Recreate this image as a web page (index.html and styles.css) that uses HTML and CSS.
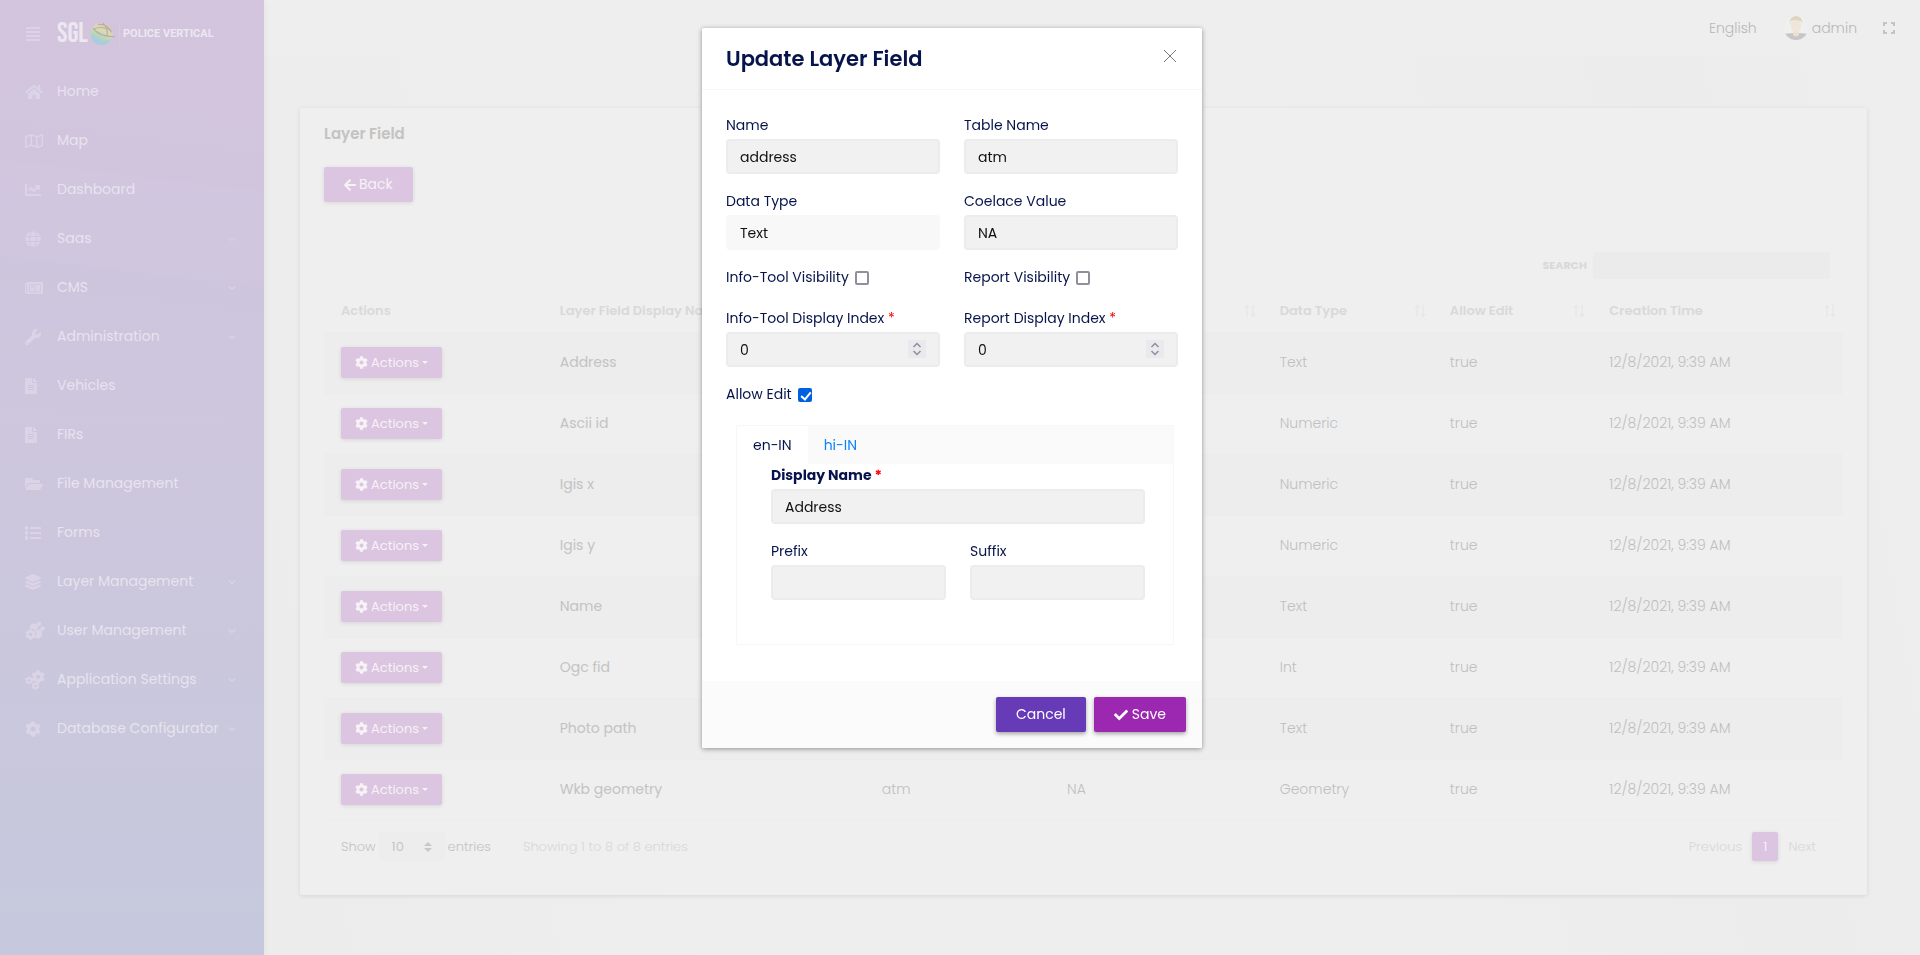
FILE: index.html
```html
<!DOCTYPE html>
<html lang="en">
<head>
<meta charset="utf-8">
<title>Layer Field</title>
<link rel="stylesheet" href="styles.css">
</head>
<body>
<svg class="sprite" aria-hidden="true">
  <symbol id="i-home" viewBox="0 0 576 512"><path d="M280.37 148.26L96 300.11V464a16 16 0 0 0 16 16l112.06-.29a16 16 0 0 0 15.92-16V368a16 16 0 0 1 16-16h64a16 16 0 0 1 16 16v95.64a16 16 0 0 0 16 16.05L464 480a16 16 0 0 0 16-16V300L295.67 148.26a12.19 12.19 0 0 0-15.3 0zM571.6 251.47L488 182.56V44.05a12 12 0 0 0-12-12h-56a12 12 0 0 0-12 12v72.61L318.47 43a48 48 0 0 0-61 0L4.34 251.47a12 12 0 0 0-1.6 16.9l25.5 31A12 12 0 0 0 45.15 301l235.22-193.74a12.19 12.19 0 0 1 15.3 0L530.9 301a12 12 0 0 0 16.9-1.6l25.5-31a12 12 0 0 0-1.7-16.93z"/></symbol>
  <symbol id="i-map" viewBox="0 0 576 512"><path d="M560.02 32c-1.96 0-3.98.37-5.96 1.16L384.01 96H384L212 35.28A64.252 64.252 0 0 0 191.76 32c-6.69 0-13.37 1.05-19.81 3.14L20.12 87.95A32.006 32.006 0 0 0 0 117.66v346.32C0 473.17 7.53 480 15.99 480c1.96 0 3.97-.37 5.96-1.16L192 416l172 60.71a63.98 63.98 0 0 0 40.05.15l151.83-52.81A31.996 31.996 0 0 0 576 394.34V48.02c0-9.19-7.53-16.02-15.98-16.02zM224 90.42l128 45.19v285.97l-128-45.19V90.42zM48 418.05V129.07l128-44.53v286.2l-.64.23L48 418.05zm480-35.13l-128 44.53V141.26l.64-.24L528 93.95v288.97z"/></symbol>
  <symbol id="i-chart" viewBox="0 0 512 512"><path d="M496 384H64V80c0-8.84-7.16-16-16-16H16C7.16 64 0 71.16 0 80v336c0 17.67 14.33 32 32 32h464c8.84 0 16-7.16 16-16v-32c0-8.84-7.16-16-16-16zM464 96H345.94c-21.38 0-32.09 25.85-16.97 40.97l32.4 32.4L288 242.75l-73.37-73.37c-12.5-12.5-32.76-12.5-45.25 0l-68.69 68.69c-6.25 6.25-6.25 16.38 0 22.63l22.62 22.62c6.25 6.25 16.38 6.25 22.63 0L192 237.25l73.37 73.37c12.5 12.5 32.76 12.5 45.25 0l96-96 32.4 32.4c15.12 15.12 40.97 4.41 40.97-16.97V112c.01-8.84-7.15-16-15.99-16z"/></symbol>
  <symbol id="i-globe" viewBox="0 0 496 512"><path d="M336.5 160C322 70.7 287.8 8 248 8s-74 62.7-88.5 152h177zM152 256c0 22.2 1.2 43.5 3.3 64h185.3c2.1-20.5 3.3-41.8 3.3-64s-1.2-43.5-3.3-64H155.3c-2.1 20.5-3.3 41.8-3.3 64zm324.7-96c-28.6-67.9-86.5-120.4-158-141.6 24.4 33.8 41.2 84.7 50 141.6h108zM177.2 18.4C105.8 39.6 47.8 92.1 19.3 160h108c8.7-56.9 25.5-107.8 49.9-141.6zM487.4 192H372.7c2.1 21 3.3 42.5 3.3 64s-1.2 43-3.3 64h114.6c5.5-20.5 8.6-41.8 8.6-64s-3.1-43.5-8.5-64zM120 256c0-21.5 1.2-43 3.3-64H8.6C3.2 212.5 0 233.8 0 256s3.2 43.5 8.6 64h114.6c-2-21-3.2-42.5-3.2-64zm39.5 96c14.5 89.3 48.7 152 88.5 152s74-62.7 88.5-152h-177zm159.3 141.6c71.4-21.2 129.4-73.7 158-141.6h-108c-8.8 56.9-25.6 107.8-50 141.6zM19.3 352c28.6 67.9 86.5 120.4 158 141.6-24.4-33.8-41.2-84.7-50-141.6h-108z"/></symbol>
  <symbol id="i-news" viewBox="0 0 576 512"><path fill-rule="evenodd" d="M88 64h464c13 0 24 11 24 24v336c0 13-11 24-24 24H56c-31 0-56-25-56-56V120c0-13 11-24 24-24h40v-8c0-13 11-24 24-24zM40 136v256c0 9 7 16 16 16s16-7 16-16V136zM130 124v264h380V124zM154 148h154v216H154zM332 148h154v216H332zM190 184v48h84v-48z"/></symbol>
  <symbol id="i-wrench" viewBox="0 0 512 512"><path d="M507.73 109.1c-2.24-9.03-13.54-12.09-20.12-5.51l-74.36 74.36-67.88-11.31-11.31-67.88 74.36-74.36c6.62-6.62 3.43-17.9-5.66-20.16-47.38-11.74-99.55.91-136.58 37.93-39.64 39.64-50.55 97.1-34.05 147.2L18.74 402.76c-24.99 24.99-24.99 65.51 0 90.5 24.99 24.99 65.51 24.99 90.5 0l213.21-213.21c50.12 16.71 107.47 5.68 147.37-34.22 37.07-37.07 49.7-89.32 37.91-136.73zM64 472c-13.25 0-24-10.75-24-24 0-13.26 10.75-24 24-24s24 10.74 24 24c0 13.25-10.75 24-24 24z"/></symbol>
  <symbol id="i-file" viewBox="0 0 384 512"><path d="M224 136V0H24C10.7 0 0 10.7 0 24v464c0 13.3 10.7 24 24 24h336c13.3 0 24-10.7 24-24V160H248c-13.2 0-24-10.8-24-24zm64 236c0 6.6-5.4 12-12 12H108c-6.6 0-12-5.4-12-12v-8c0-6.6 5.4-12 12-12h168c6.6 0 12 5.4 12 12v8zm0-64c0 6.6-5.4 12-12 12H108c-6.6 0-12-5.4-12-12v-8c0-6.6 5.4-12 12-12h168c6.6 0 12 5.4 12 12v8zm0-72v8c0 6.6-5.4 12-12 12H108c-6.6 0-12-5.4-12-12v-8c0-6.6 5.4-12 12-12h168c6.6 0 12 5.4 12 12zm96-114.1v6.1H256V0h6.1c6.4 0 12.5 2.5 17 7l97.9 98c4.5 4.5 7 10.6 7 16.9z"/></symbol>
  <symbol id="i-folder" viewBox="0 0 576 512"><path d="M572.694 292.093L500.27 416.248A63.997 63.997 0 0 1 444.989 448H45.025c-18.523 0-30.064-20.093-20.731-36.093l72.424-124.155A64 64 0 0 1 152 256h399.964c18.523 0 30.064 20.093 20.73 36.093zM152 224h328v-48c0-26.51-21.49-48-48-48H272l-64-64H48C21.49 64 0 85.49 0 112v278.046l69.077-118.418C86.214 242.25 117.989 224 152 224z"/></symbol>
  <symbol id="i-list" viewBox="0 0 16 16"><rect x="0" y="1" width="3" height="4" rx="1"/><rect x="0" y="6" width="3" height="4" rx="1"/><rect x="0" y="11" width="3" height="4" rx="1"/><rect x="5" y="2" width="11" height="2" rx=".5"/><rect x="5" y="7" width="11" height="2" rx=".5"/><rect x="5" y="12" width="11" height="2" rx=".5"/></symbol>
  <symbol id="i-layers" viewBox="0 0 512 512"><path d="M12.41 148.02l232.94 105.67c6.8 3.09 14.49 3.09 21.29 0l232.94-105.67c16.55-7.51 16.55-32.52 0-40.03L266.65 2.31a25.607 25.607 0 0 0-21.29 0L12.41 107.98c-16.55 7.51-16.55 32.53 0 40.04zm487.18 88.28l-58.09-26.33-161.64 73.27c-7.56 3.43-15.59 5.17-23.86 5.17s-16.29-1.74-23.86-5.17L70.51 209.97l-58.1 26.33c-16.55 7.5-16.55 32.5 0 40l232.94 105.59c6.8 3.08 14.49 3.08 21.29 0L499.59 276.3c16.55-7.5 16.55-32.5 0-40zm0 127.8l-57.87-26.23-161.86 73.37c-7.56 3.43-15.59 5.17-23.86 5.17s-16.29-1.74-23.86-5.17L70.29 337.87 12.41 364.1c-16.55 7.5-16.55 32.5 0 40l232.94 105.59c6.8 3.08 14.49 3.08 21.29 0L499.59 404.1c16.55-7.5 16.55-32.5 0-40z"/></symbol>
  <symbol id="i-cog" viewBox="0 0 512 512"><path d="M487.4 315.7l-42.6-24.6c4.3-23.2 4.3-47 0-70.2l42.6-24.6c4.9-2.8 7.1-8.6 5.5-14-11.1-35.6-30-67.8-54.7-94.6-3.8-4.1-10-5.1-14.8-2.3L380.8 110c-17.9-15.4-38.5-27.3-60.8-35.1V25.8c0-5.6-3.9-10.5-9.4-11.7-36.7-8.2-74.3-7.8-109.2 0-5.5 1.2-9.4 6.1-9.4 11.7V75c-22.2 7.9-42.8 19.8-60.8 35.1L88.7 85.5c-4.9-2.8-11-1.9-14.8 2.3-24.7 26.7-43.6 58.9-54.7 94.6-1.7 5.4.6 11.2 5.5 14L67.3 221c-4.3 23.2-4.3 47 0 70.2l-42.6 24.6c-4.9 2.8-7.1 8.6-5.5 14 11.1 35.6 30 67.8 54.7 94.6 3.8 4.1 10 5.1 14.8 2.3l42.6-24.6c17.9 15.4 38.5 27.3 60.8 35.1v49.2c0 5.6 3.9 10.5 9.4 11.7 36.7 8.2 74.3 7.8 109.2 0 5.5-1.2 9.4-6.1 9.4-11.7v-49.2c22.2-7.9 42.8-19.8 60.8-35.1l42.6 24.6c4.9 2.8 11 1.9 14.8-2.3 24.7-26.7 43.6-58.9 54.7-94.6 1.5-5.5-.7-11.3-5.6-14.1zM256 336c-44.1 0-80-35.9-80-80s35.9-80 80-80 80 35.9 80 80-35.9 80-80 80z"/></symbol>
  <symbol id="i-usercog" viewBox="0 0 20 20"><use href="#i-cog" x="0" y="8" width="11" height="11"/><circle cx="14" cy="3" r="2.300"/><circle cx="17.500" cy="7.500" r="2.200"/><path d="M4 7.500C5 3.500 8 1.500 11.500 3c0 2 1 3 2.500 3.500-2 1-3 2-3 4C8.500 7.500 6 7 4 7.500z"/><path d="M11 10c2-3 6-2 6 1 .500 4-1 6.500-4 6.500-2 0-2.500-1-3.500-2 2-1.500 2.500-3 1.500-5.500z"/></symbol>
  <symbol id="i-cogs" viewBox="0 0 22 22"><use href="#i-cog" x="7" y="0" width="15" height="15"/><use href="#i-cog" x="0" y="7" width="9" height="9"/><use href="#i-cog" x="7" y="13" width="9" height="9"/></symbol>
  <symbol id="i-check" viewBox="0 0 512 512"><path d="M173.898 439.404l-166.4-166.4c-9.997-9.997-9.997-26.206 0-36.204l36.203-36.204c9.997-9.998 26.207-9.998 36.204 0L192 312.69 432.095 72.596c9.997-9.997 26.207-9.997 36.204 0l36.203 36.204c9.997 9.997 9.997 26.206 0 36.204l-294.4 294.401c-9.998 9.997-26.207 9.997-36.204-.001z"/></symbol>
  <symbol id="i-back" viewBox="0 0 448 512"><path d="M257.5 445.1l-22.2 22.2c-9.4 9.4-24.6 9.4-33.9 0L7 273c-9.4-9.4-9.4-24.6 0-33.9L201.4 44.7c9.4-9.4 24.6-9.4 33.9 0l22.2 22.2c9.5 9.5 9.3 25-.4 34.3L136.6 216H424c13.3 0 24 10.7 24 24v32c0 13.3-10.7 24-24 24H136.6l120.5 114.8c9.8 9.3 10 24.8.4 34.3z"/></symbol>
  <symbol id="i-chevron" viewBox="0 0 10 10"><path d="M1 3 5 7 9 3" fill="none" stroke="currentColor" stroke-width="1.800"/></symbol>
  <symbol id="i-sort" viewBox="0 0 12 14"><path d="M3 13V1.500M1 4l2-2.500L5 4M9 1v11.500M7 10l2 2.500L11 10" fill="none" stroke="currentColor"/></symbol>
  <symbol id="i-spin" viewBox="0 0 18 18"><path d="M5.500 7 9 3.500 12.500 7M5.500 11 9 14.500 12.500 11" fill="none" stroke="currentColor" stroke-width="1.500"/></symbol>
</svg>

<div class="app">
  <aside class="sidebar">
    <div class="brand">
      <button class="burger" type="button" aria-label="Toggle menu"><svg viewBox="0 0 14 14"><path d="M0 1h14M0 5h14M0 9h14M0 13h14" stroke="currentColor" stroke-width="2"/></svg></button>
      <a class="logo" href="#">
        <span class="logo-name">SGL</span>
        <svg class="logo-globe" viewBox="0 0 25 24"><defs><linearGradient id="gl" x1=".8" y1="0" x2=".3" y2="1"><stop offset="0" stop-color="#e9c8ad"/><stop offset=".4" stop-color="#dbdab0"/><stop offset=".65" stop-color="#b6d8b5"/><stop offset="1" stop-color="#a4c8e2"/></linearGradient></defs><circle cx="11.500" cy="12" r="11" fill="url(#gl)"/><path d="M1 14c3-2 5 0 8 3s8 2 12 0c-3 7-17 8-20-3z" fill="#a9cde0"/><path d="M3 6.500c5 6 12 8.500 22 8M8 2.500c6-1 11 2 13.500 8M13 1c3 3 5 7 4 13M3.500 7c5-2 12-2 18 1.500" fill="none" stroke="#b5b0ae" stroke-width="1.200"/></svg>
        <span class="logo-product">POLICE VERTICAL</span>
      </a>
    </div>
    <nav class="nav">
      <a href="#"><svg class="w18"><use href="#i-home"/></svg><span>Home</span></a>
      <a href="#"><svg class="w18"><use href="#i-map"/></svg><span>Map</span></a>
      <a href="#"><svg class="w16"><use href="#i-chart"/></svg><span>Dashboard</span></a>
      <a href="#"><svg class="w16"><use href="#i-globe"/></svg><span>Saas</span><svg class="chev"><use href="#i-chevron"/></svg></a>
      <a href="#"><svg class="w18"><use href="#i-news"/></svg><span>CMS</span><svg class="chev"><use href="#i-chevron"/></svg></a>
      <a href="#"><svg class="w16"><use href="#i-wrench"/></svg><span>Administration</span><svg class="chev"><use href="#i-chevron"/></svg></a>
      <a href="#"><svg class="w12"><use href="#i-file"/></svg><span>Vehicles</span></a>
      <a href="#"><svg class="w12"><use href="#i-file"/></svg><span>FIRs</span></a>
      <a href="#"><svg class="w18"><use href="#i-folder"/></svg><span>File Management</span></a>
      <a href="#"><svg class="w16"><use href="#i-list"/></svg><span>Forms</span></a>
      <a href="#"><svg class="w16"><use href="#i-layers"/></svg><span>Layer Management</span><svg class="chev"><use href="#i-chevron"/></svg></a>
      <a href="#"><svg class="w20"><use href="#i-usercog"/></svg><span>User Management</span><svg class="chev"><use href="#i-chevron"/></svg></a>
      <a href="#"><svg class="w20"><use href="#i-cogs"/></svg><span>Application Settings</span><svg class="chev"><use href="#i-chevron"/></svg></a>
      <a href="#"><svg class="w16"><use href="#i-cog"/></svg><span>Database Configurator</span><svg class="chev"><use href="#i-chevron"/></svg></a>
    </nav>
  </aside>

  <div class="page">
    <header class="topbar">
      <a class="lang" href="#">English</a>
      <a class="user" href="#"><svg class="avatar" viewBox="0 0 24 24"><defs><clipPath id="av"><circle cx="12" cy="12" r="12"/></clipPath></defs><circle cx="12" cy="12" r="12" fill="#f0f0f0"/><g clip-path="url(#av)"><path d="M0 18q12-2 24 0v6H0z" fill="#c6c6c6"/><path d="M9 14h6v5q-3 3-6 0z" fill="#ebdfd2"/><ellipse cx="12" cy="10" rx="5" ry="7" fill="#efe5da"/><path d="M6 9C5 2 9 0 12 0s7 2 6 8l-1-3q-3 0-5-1-3 0-5 1z" fill="#ddd4c2"/></g></svg>admin</a>
      <button class="full" type="button" aria-label="Full screen"><svg viewBox="0 0 12 12"><path d="M1 4V1h3M8 1h3v3M11 8v3H8M4 11H1V8" fill="none" stroke="currentColor" stroke-width="2"/></svg></button>
    </header>

    <main class="card">
      <h1 class="card-title">Layer Field</h1>
      <button class="btn pale" type="button"><svg class="w12"><use href="#i-back"/></svg>Back</button>
      <div class="search"><label for="q">SEARCH</label><input id="q" type="search"></div>

      <table class="grid">
        <colgroup><col class="c1"><col class="c2"><col class="c3"><col class="c4"><col class="c5"><col class="c6"><col class="c7"></colgroup>
        <thead><tr>
          <th>Actions</th>
          <th><div class="th">Layer Field Display Name<svg><use href="#i-sort"/></svg></div></th>
          <th><div class="th">Table Name<svg><use href="#i-sort"/></svg></div></th>
          <th><div class="th">Coelace Value<svg><use href="#i-sort"/></svg></div></th>
          <th><div class="th">Data Type<svg><use href="#i-sort"/></svg></div></th>
          <th><div class="th">Allow Edit<svg><use href="#i-sort"/></svg></div></th>
          <th><div class="th">Creation Time<svg><use href="#i-sort"/></svg></div></th>
        </tr></thead>
        <tbody>
          <tr><td><button class="btn pale small" type="button"><svg class="w13"><use href="#i-cog"/></svg>Actions<i class="caret"></i></button></td><td class="main">Address</td><td>atm</td><td>NA</td><td>Text</td><td>true</td><td>12/8/2021, 9:39 AM</td></tr>
          <tr><td><button class="btn pale small" type="button"><svg class="w13"><use href="#i-cog"/></svg>Actions<i class="caret"></i></button></td><td class="main">Ascii id</td><td>atm</td><td>NA</td><td>Numeric</td><td>true</td><td>12/8/2021, 9:39 AM</td></tr>
          <tr><td><button class="btn pale small" type="button"><svg class="w13"><use href="#i-cog"/></svg>Actions<i class="caret"></i></button></td><td class="main">Igis x</td><td>atm</td><td>NA</td><td>Numeric</td><td>true</td><td>12/8/2021, 9:39 AM</td></tr>
          <tr><td><button class="btn pale small" type="button"><svg class="w13"><use href="#i-cog"/></svg>Actions<i class="caret"></i></button></td><td class="main">Igis y</td><td>atm</td><td>NA</td><td>Numeric</td><td>true</td><td>12/8/2021, 9:39 AM</td></tr>
          <tr><td><button class="btn pale small" type="button"><svg class="w13"><use href="#i-cog"/></svg>Actions<i class="caret"></i></button></td><td class="main">Name</td><td>atm</td><td>NA</td><td>Text</td><td>true</td><td>12/8/2021, 9:39 AM</td></tr>
          <tr><td><button class="btn pale small" type="button"><svg class="w13"><use href="#i-cog"/></svg>Actions<i class="caret"></i></button></td><td class="main">Ogc fid</td><td>atm</td><td>NA</td><td>Int</td><td>true</td><td>12/8/2021, 9:39 AM</td></tr>
          <tr><td><button class="btn pale small" type="button"><svg class="w13"><use href="#i-cog"/></svg>Actions<i class="caret"></i></button></td><td class="main">Photo path</td><td>atm</td><td>NA</td><td>Text</td><td>true</td><td>12/8/2021, 9:39 AM</td></tr>
          <tr><td><button class="btn pale small" type="button"><svg class="w13"><use href="#i-cog"/></svg>Actions<i class="caret"></i></button></td><td class="main">Wkb geometry</td><td>atm</td><td>NA</td><td>Geometry</td><td>true</td><td>12/8/2021, 9:39 AM</td></tr>
        </tbody>
      </table>

      <div class="table-foot">
        <label class="length">Show
          <span class="picker"><select><option>10</option><option>25</option><option>50</option></select><svg viewBox="0 0 8 10"><path d="M0 4 4 0l4 4zM0 6l4 4 4-4z"/></svg></span>
          entries</label>
        <span class="info">Showing 1 to 8 of 8 entries</span>
        <div class="pager"><a href="#">Previous</a><a class="current" href="#">1</a><a href="#">Next</a></div>
      </div>
    </main>
  </div>
</div>

<div class="overlay">
  <form class="modal" role="dialog" aria-labelledby="dlg-title">
    <header class="modal-head">
      <h2 id="dlg-title">Update Layer Field</h2>
      <button class="close" type="button" aria-label="Close"><svg viewBox="0 0 14 14"><path d="M1 1l12 12M13 1 1 13" stroke="currentColor"/></svg></button>
    </header>
    <div class="modal-body">
      <div class="pair">
        <div class="field"><label for="name">Name</label><input id="name" type="text" value="address"></div>
        <div class="field"><label for="table">Table Name</label><input id="table" type="text" value="atm"></div>
        <div class="field"><label for="type">Data Type</label><select id="type" disabled><option>Text</option></select></div>
        <div class="field"><label for="coal">Coelace Value</label><input id="coal" type="text" value="NA"></div>
        <div class="tick"><label for="iv">Info-Tool Visibility</label><input id="iv" type="checkbox"></div>
        <div class="tick"><label for="rv">Report Visibility</label><input id="rv" type="checkbox"></div>
        <div class="field"><label for="ii">Info-Tool Display Index <b class="req">*</b></label><div class="number"><input id="ii" type="number" value="0"><svg><use href="#i-spin"/></svg></div></div>
        <div class="field"><label for="ri">Report Display Index <b class="req">*</b></label><div class="number"><input id="ri" type="number" value="0"><svg><use href="#i-spin"/></svg></div></div>
        <div class="tick"><label for="ae">Allow Edit</label><input id="ae" type="checkbox" checked></div>
      </div>
      <section class="tabs">
        <div class="tab-bar" role="tablist"><button class="tab active" type="button" role="tab">en-IN</button><button class="tab" type="button" role="tab">hi-IN</button></div>
        <div class="tab-body">
          <div class="field strong"><label for="dn">Display Name <b class="req">*</b></label><input id="dn" type="text" value="Address"></div>
          <div class="pair">
            <div class="field"><label for="pre">Prefix</label><input id="pre" type="text"></div>
            <div class="field"><label for="suf">Suffix</label><input id="suf" type="text"></div>
          </div>
        </div>
      </section>
    </div>
    <footer class="modal-foot">
      <button class="btn cancel" type="button">Cancel</button>
      <button class="btn save" type="submit"><svg class="w14"><use href="#i-check"/></svg>Save</button>
    </footer>
  </form>
</div>
</body>
</html>
```
FILE: styles.css
```css
* { box-sizing: border-box; }
body {
  margin: 0;
  font-family: Poppins, Inter, "Open Sans", sans-serif;
  font-size: 14px;
  line-height: 21px;
  color: #cacaca;
  background: #eee;
}
button, input, select { font: inherit; color: inherit; }
button { cursor: pointer; }
a { color: inherit; text-decoration: none; }
svg { fill: currentColor; flex: none; }
.sprite { position: absolute; width: 0; height: 0; }
.w12 { width: 12px; height: 16px; }
.w13 { width: 13px; height: 13px; }
.w14 { width: 14px; height: 14px; }
.w16 { width: 16px; height: 16px; }
.w18 { width: 18px; height: 16px; }
.w20 { width: 20px; height: 20px; }

.app { display: grid; grid-template-columns: 264px minmax(0, 1fr); min-height: 100vh; }

.sidebar {
  z-index: 1;
  color: #e8e3ee;
  background:
    linear-gradient(187deg, rgba(212, 196, 222, .8) 0, rgba(208, 196, 221, .6) 190px, transparent 191px),
    linear-gradient(187deg, transparent 285px, rgba(204, 197, 220, .5) 286px, transparent 440px),
    linear-gradient(#d4c6df 0, #cfc6de 300px, #cbc7dd 600px, #c6c9dd 100%);
  box-shadow: 0 0 6px rgba(0, 0, 0, .06);
}
.brand { display: flex; align-items: center; height: 67px; padding: 0 25px 0 26px; gap: 17px; }
.burger { display: flex; width: 14px; height: 14px; padding: 0; border: 0; background: none; color: #ddd3e6; }
.burger svg { width: 14px; height: 14px; }
.logo { display: flex; align-items: center; color: #ece8f0; }
.logo-name { font-family: "Bebas Neue", Oswald, "Roboto Condensed", "Liberation Sans Narrow", sans-serif; font-size: 28px; line-height: 28px; font-weight: 400; }
.logo-globe { width: 25px; height: 24px; margin-left: 2px; }
.logo-product { margin-left: 4px; padding-left: 3px; border-left: 1px solid #dcc9d6; font-family: Roboto, sans-serif; font-size: 11px; line-height: 24px; font-weight: 700; white-space: nowrap; }
.nav { display: flex; flex-direction: column; }
.nav a { display: grid; grid-template-columns: 32px 1fr 8px; align-items: center; height: 49px; padding: 0 28px 0 25px; }
.nav svg { color: #dad4e6; }
.nav .chev { width: 8px; height: 8px; color: #d8d2e4; }

.page { display: flex; flex-direction: column; background: linear-gradient(80deg, #ececec 0, #eee 30%, #eee 60%, #ececec 85%, #eee 100%); }
.topbar { display: flex; justify-content: flex-end; align-items: center; height: 56px; padding-right: 25px; font-weight: 300; color: #b8b8b8; background: #eee; }
.user { display: flex; align-items: center; gap: 4px; margin: 0 26px 0 27px; }
.avatar { width: 24px; height: 24px; }
.full { display: flex; padding: 0; border: 0; background: none; color: #c4c4c4; }
.full svg { width: 12px; height: 12px; }

.card { margin: 52px 53px 60px 36px; padding: 16px 24px 34px; border-radius: 2px; background: #efefef; box-shadow: 0 1px 4px rgba(0, 0, 0, .1); }
.card-title { margin: 0 0 23px; font-size: 15px; line-height: 20px; font-weight: 600; color: #c3c3c3; }
.btn { display: inline-flex; align-items: center; justify-content: center; gap: 4px; height: 35px; padding: 0 20px; border: 0; border-radius: 2px; color: #fff; box-shadow: 0 2px 4px rgba(0, 0, 0, .35); }
.btn.pale { gap: 3px; color: #f6f2f6; background: #dcc5e1; box-shadow: 0 1px 4px rgba(0, 0, 0, .1); }
.btn.small { height: 31px; padding: 0 14px; font-size: 13px; }
.caret { border: 3px solid transparent; border-top-color: currentColor; border-bottom: 0; }
.search { display: flex; justify-content: flex-end; align-items: center; gap: 6px; margin-top: 50px; padding-right: 13px; font-size: 11px; font-weight: 700; color: #d9d9d9; }
.search input { width: 237px; height: 27px; border: 0; border-radius: 3px; background: #ebebeb; }

.grid { width: 100%; margin-top: 11px; border-collapse: collapse; table-layout: fixed; }
.c1 { width: 14.4%; }
.c2 { width: 21.2%; }
.c3 { width: 12.2%; }
.c4 { width: 14%; }
.c5 { width: 11.2%; }
.c6 { width: 10.5%; }
.c7 { width: 16.5%; }
.grid th { height: 42px; padding: 0 7px 0 17px; text-align: left; font-size: 13px; font-weight: 600; color: #d9d9d9; border-bottom: 1px solid #ececec; }
.th { display: flex; justify-content: space-between; align-items: center; white-space: nowrap; }
.th svg { width: 12px; height: 14px; color: #e4e4e4; }
.grid td { height: 61px; padding: 0 17px; font-weight: 300; color: #bfbfbf; border-bottom: 1px solid #ececec; }
.grid td .btn { vertical-align: middle; font-weight: 400; }
.grid tbody tr:nth-child(odd) { background: #ededed; }
.grid td.main { font-weight: 400; color: #c3c3c3; }

.table-foot { display: flex; align-items: center; margin-top: 11px; padding: 0 27px 0 17px; font-size: 13px; font-weight: 300; }
.length { display: flex; align-items: center; gap: 3px; color: #c3c3c8; }
.picker { position: relative; display: flex; }
.picker select { width: 66px; height: 29px; padding: 0 12px; appearance: none; border: 1px solid #ececec; border-radius: 4px; background: #ededed; font-weight: 400; color: #c6c6c6; }
.picker svg { position: absolute; right: 13px; top: 10px; width: 8px; height: 10px; color: #c8c8c8; pointer-events: none; }
.info { margin-left: 32px; color: #d8d8db; }
.pager { display: flex; align-items: center; gap: 10px; margin-left: auto; color: #d8d8db; }
.pager .current { padding: 4px 11px; border-radius: 2px; background: #dcc5e1; font-weight: 400; color: #f6f2f6; box-shadow: 0 1px 4px rgba(0, 0, 0, .1); }

.overlay { position: fixed; inset: 0; z-index: 2; overflow: auto; padding: 28px 16px 28px 0; }
.modal { width: 500px; max-width: 100%; margin: 0 auto; border-radius: 2px; background: #fff; color: #07144b; box-shadow: 0 1px 5px rgba(0, 0, 0, .4); }
.modal-head { display: flex; justify-content: space-between; padding: 16px 25px 15px 24px; border-bottom: 1px solid #f7f7f7; }
.modal-head h2 { margin: 0; font-size: 21px; line-height: 30px; font-weight: 600; }
.close { display: flex; align-self: flex-start; margin-top: 5px; padding: 0; border: 0; background: none; color: #777; }
.close svg { width: 14px; height: 14px; }
.modal-body { padding: 25px 24px 36px; }
.pair { display: grid; grid-template-columns: 1fr 1fr; column-gap: 24px; }
.field { display: flex; flex-direction: column; gap: 3px; margin-bottom: 17px; min-width: 0; }
.field input, .field select { width: 100%; height: 35px; padding: 1px 12px 0; border: 2px solid #ececec; border-radius: 4px; background: #f1f1f1; color: #111; }
.field select { appearance: none; border-color: #f8f8f8; background: #f8f8f8; opacity: 1; }
.strong label { font-weight: 700; }
.req { color: #f00; font-weight: 400; }
.strong .req { font-weight: 700; }
.tick { display: flex; align-items: center; gap: 6px; height: 21px; margin-bottom: 20px; }
.tick input {
  width: 14px; height: 14px; margin: 0; appearance: none;
  border: 2px solid #8f8f9d; border-radius: 2px; background: #fff;
}
.tick input:checked { position: relative; border-color: #0060df; background: #0060df; }
.tick input:checked::after { content: ""; position: absolute; left: 3px; top: 0; width: 4px; height: 8px; border: solid #fff; border-width: 0 2px 2px 0; transform: rotate(40deg); }
.number { position: relative; }
.number input { appearance: textfield; }
.number input::-webkit-inner-spin-button { appearance: none; margin: 0; }
.number svg { position: absolute; right: 14px; top: 8px; width: 18px; height: 18px; background: #e9e9ee; color: #8f8f9d; }
.tabs { margin: 0 4px 0 10px; border: 1px solid #f7f7f7; }
.tab-bar { display: flex; background: #fafafa; }
.tab { height: 38px; padding: 0 16px; border: 0; background: none; color: #0a84ff; }
.tab.active { border-radius: 3px 3px 0 0; background: #fff; color: #07144b; }
.tab-body { padding: 1px 28px 27px 34px; }
.modal-foot { display: flex; justify-content: flex-end; gap: 8px; padding: 16px; background: #fbfbfb; border-radius: 0 0 2px 2px; }
.cancel { background: #673ab7; }
.save { background: #9c27b0; }
```
